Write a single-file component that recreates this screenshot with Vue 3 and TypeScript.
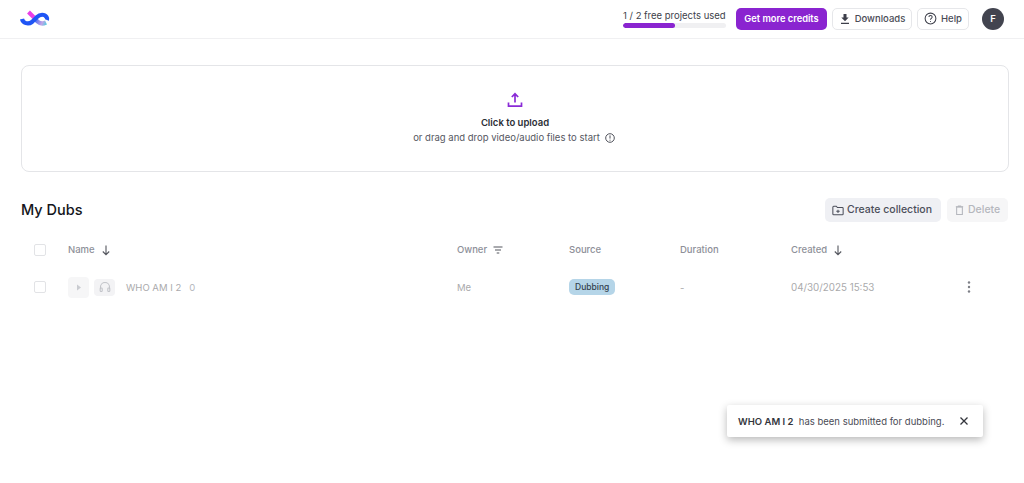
<script setup lang="ts">
interface Column { label: string; icon?: 'sort' | 'filter' }
const columns: Column[] = [
  { label: 'Name', icon: 'sort' },
  { label: 'Owner', icon: 'filter' },
  { label: 'Source' },
  { label: 'Duration' },
  { label: 'Created', icon: 'sort' },
]
</script>

<template>
  <div class="page">
    <header class="topbar">
      <svg class="logo" width="32" height="18" viewBox="0 0 32 18" fill="none">
        <defs>
          <linearGradient id="lg" x1="16" y1="8" x2="30" y2="14" gradientUnits="userSpaceOnUse">
            <stop offset="0" stop-color="#3f66f2" />
            <stop offset="0.55" stop-color="#c2a4e8" />
            <stop offset="1" stop-color="#22e0dc" />
          </linearGradient>
        </defs>
        <path d="M9.500 2l5.500 5.500" stroke="#ea3fe6" stroke-width="4" />
        <path d="M16 9l2.500 2.500c2.500 2.300 5.500 2.500 8.500 1" stroke="url(#lg)" stroke-width="4.200" />
        <path d="M3 9c1 4 6 6 10 3l5-5c3-3 7.500-3 9.500 0 .8 1.200.8 2.200.5 3" stroke="#1f55f5" stroke-width="4.200" />
      </svg>
      <div class="usage">
        <span class="usage-text">1 / 2 free projects used</span>
        <div class="track"><div class="fill"></div></div>
      </div>
      <button class="credits">Get more credits</button>
      <button class="outline downloads">
        <svg width="12" height="12" viewBox="0 0 12 12" fill="#3d3f4a"><path d="M4.500 1h3v3.500h2.200L6 8.200 2.300 4.500h2.200zM2 9.700h8V11H2z" /></svg>
        Downloads
      </button>
      <button class="outline help">
        <svg width="13" height="13" viewBox="0 0 14 14" fill="none" stroke="#3d3f4a" stroke-width="1.100"><circle cx="7" cy="7" r="5.800" /><path d="M5.300 5.500c0-2.200 3.500-2.200 3.500 0 0 1.400-1.800 1.300-1.800 2.800" /><path d="M7 9.700v.9" /></svg>
        Help
      </button>
      <div class="avatar">F</div>
    </header>

    <section class="upload">
      <svg width="16" height="16" viewBox="0 0 16 16" fill="none" stroke="#8a2bd6" stroke-width="1.700"><path d="M8 10.500V2M4.800 5L8 1.800 11.200 5" /><path d="M1.500 10.500v3.700h13v-3.700" /></svg>
      <div class="upload-title">Click to upload</div>
      <div class="upload-sub">
        or drag and drop video/audio files to start
        <svg width="10" height="10" viewBox="0 0 10 10" fill="none" stroke="#3d3f4a" stroke-width="0.900"><circle cx="5" cy="5" r="4.300" /><path d="M5 2.400v3.200M5 6.700v1" /></svg>
      </div>
    </section>

    <section class="heading">
      <h1>My Dubs</h1>
      <div class="actions">
        <button class="soft create">
          <svg width="12" height="11" viewBox="0 0 14 12" fill="none" stroke="#4b4e5a" stroke-width="1.200"><path d="M1 2.200C1 1.500 1.400 1 2 1h3l1.300 1.500H12c.6 0 1 .4 1 1v6.500c0 .6-.4 1-1 1H2c-.6 0-1-.4-1-1z" /><path d="M7 5v4M5 7h4" /></svg>
          <span>Create collection</span>
        </button>
        <button class="soft delete">
          <svg width="9" height="12" viewBox="0 0 11 13" fill="none" stroke="#b5b7bd" stroke-width="1.300"><path d="M1 2.500h9M3.500 1.500h4" /><path d="M2 2.800h7V12H2z" /></svg>
          <span>Delete</span>
        </button>
      </div>
    </section>

    <section class="table">
      <div class="row head">
        <span class="check"></span>
        <div v-for="c in columns" :key="c.label" class="th">
          {{ c.label }}
          <svg v-if="c.icon === 'sort'" width="10" height="12" viewBox="0 0 10 12" fill="none" stroke="#55575f" stroke-width="1.100"><path d="M5 1.500v9M1.800 7.500L5 10.700l3.200-3.200" /></svg>
          <svg v-if="c.icon === 'filter'" width="10" height="8" viewBox="0 0 10 8" fill="none" stroke="#55575f" stroke-width="1.100"><path d="M.5 1h9M2 4h6M3.700 7h2.600" /></svg>
        </div>
        <span></span>
      </div>
      <div class="row body">
        <span class="check"></span>
        <div class="name">
          <span class="media play"><svg width="6" height="7" viewBox="0 0 6 7" fill="#c9cbd0"><path d="M1 .5l4 3-4 3z" /></svg></span>
          <span class="media phones"><svg width="12" height="12" viewBox="0 0 12 12" fill="none" stroke="#c2c4c9" stroke-width="1.100"><path d="M1.500 8V6a4.500 4.500 0 0 1 9 0v2" /><rect x="1.200" y="7" width="2" height="3.500" rx="0.800" /><rect x="8.800" y="7" width="2" height="3.500" rx="0.800" /></svg></span>
          <span class="title">WHO AM I 2</span>
          <span class="count">0</span>
        </div>
        <div class="cell">Me</div>
        <div class="badge-cell"><span class="badge">Dubbing</span></div>
        <div class="cell">-</div>
        <div class="cell date">04/30/2025 15:53</div>
        <svg class="more" width="4" height="12" viewBox="0 0 4 12" fill="#7d7f86"><circle cx="2" cy="1.500" r="1.200" /><circle cx="2" cy="6" r="1.200" /><circle cx="2" cy="10.500" r="1.200" /></svg>
      </div>
    </section>

    <div class="toast">
      <span class="toast-text"><strong>WHO AM I 2</strong>&nbsp; has been submitted for dubbing.</span>
      <svg width="10" height="10" viewBox="0 0 10 10" fill="none" stroke="#33353c" stroke-width="1.300"><path d="M1.500 1.500l7 7M8.500 1.500l-7 7" /></svg>
    </div>
  </div>
</template>

<style>
html, body { margin: 0; background: #fff; }
</style>

<style scoped>
* { box-sizing: border-box; }
.page {
  position: relative;
  height: 483px;
  overflow: hidden;
  font-family: Inter, "Liberation Sans", sans-serif;
  color: #33353c;
  background: #fff;
}
button { font-family: inherit; cursor: pointer; }
.topbar {
  display: flex;
  align-items: center;
  height: 39px;
  padding: 0 20px 1px 19px;
  border-bottom: 1px solid #f0f0f2;
}
.logo { margin-right: auto; }
.usage { width: 103px; margin-right: 10px; margin-top: -1px; }
.usage-text { display: block; font-size: 9.500px; line-height: 13px; color: #3d3f4a; white-space: nowrap; }
.track { height: 5px; margin-top: 1px; border-radius: 3px; background: #f0f0f2; overflow: hidden; }
.fill { width: 50%; height: 100%; border-radius: 3px; background: #8a24d0; }
.credits {
  width: 91px; height: 22px; padding: 0; margin-right: 5px;
  border: 0; border-radius: 5px;
  background: #8a24d0; color: #fff;
  font-size: 9.300px; font-weight: 600;
}
.outline {
  display: flex; align-items: center; justify-content: center; gap: 4px;
  height: 22px; padding: 0;
  border: 1px solid #e6e7ea; border-radius: 5px;
  background: #fff; color: #4a4c56;
  font-size: 9.500px; font-weight: 500;
}
.downloads { width: 80px; margin-right: 5px; }
.help { width: 52px; margin-right: 13px; }
.avatar {
  width: 22px; height: 22px; border-radius: 50%;
  background: #42444f; color: #fff;
  display: flex; align-items: center; justify-content: center;
  font-size: 9.500px; font-weight: 600;
}
.upload {
  display: flex; flex-direction: column; align-items: center;
  height: 107px; margin: 26px 15px 0 21px; padding-top: 26px;
  border: 1px solid #e4e5e8; border-radius: 8px;
}
.upload-title { margin-top: 8px; font-size: 9.500px; line-height: 14px; font-weight: 600; color: #2c2e36; }
.upload-sub { display: flex; align-items: center; gap: 5px; padding-right: 2px; font-size: 9.500px; line-height: 15px; color: #55575f; }
.heading {
  display: flex; align-items: center; justify-content: space-between;
  height: 24px; margin: 26px 16px 0 21px;
}
h1 { margin: 0; padding-bottom: 2px; font-size: 14.500px; font-weight: 500; color: #14151a; }
.actions { display: flex; gap: 6px; }
.soft {
  display: flex; align-items: center; justify-content: flex-start; gap: 3px;
  height: 24px; padding: 0 0 0 7px; border: 0; border-radius: 5px;
  font-size: 10.500px; font-weight: 500;
}
.soft span { margin-bottom: 1px; }
.create { width: 116px; background: #eff0f4; color: #4b4e5a; }
.delete { width: 61px; padding-left: 8px; background: #f6f6f7; color: #b5b7bd; gap: 4px; }
.table { margin: 14px 0 0 34px; }
.row {
  display: grid;
  grid-template-columns: 34px 389px 112px 111px 111px 177px 12px;
  align-items: center;
}
.head { height: 27px; }
.body { height: 48px; }
.check { width: 12px; height: 12px; border: 1px solid #e2e3e6; border-radius: 2px; }
.th {
  display: flex; align-items: center; gap: 6px;
  font-size: 9.500px; font-weight: 500; color: #8e9099;
}
.name { display: flex; align-items: center; font-size: 9.500px; color: #aaaaac; }
.media { display: flex; align-items: center; justify-content: center; border-radius: 4px; background: #f6f6f7; }
.play { width: 21px; height: 21px; margin-right: 5px; }
.phones { width: 21px; height: 17px; margin-right: 11px; background: #f3f3f5; }
.title { font-weight: 400; margin-right: 8px; }
.count { color: #b5b7bd; }
.cell { font-size: 9.500px; color: #aaaaac; }
.date { font-size: 9.800px; }
.badge-cell { display: flex; }
.badge {
  display: block; height: 16px; padding: 0 6px;
  border-radius: 5px; background: #b5d5e8; color: #33424e;
  font-size: 8.500px; font-weight: 500; line-height: 16px;
}
.more { margin-left: -1px; }
.toast {
  position: absolute; left: 727px; top: 405px;
  display: flex; align-items: center; justify-content: space-between;
  width: 256px; height: 32px; padding: 0 14px 0 11px;
  background: #fff; border-radius: 2px;
  box-shadow: 0 3px 8px rgba(0, 0, 0, 0.28);
  font-size: 9.500px; color: #4a4c56;
}
.toast-text { white-space: nowrap; }
.toast-text strong { font-weight: 600; color: #33353c; }
</style>
